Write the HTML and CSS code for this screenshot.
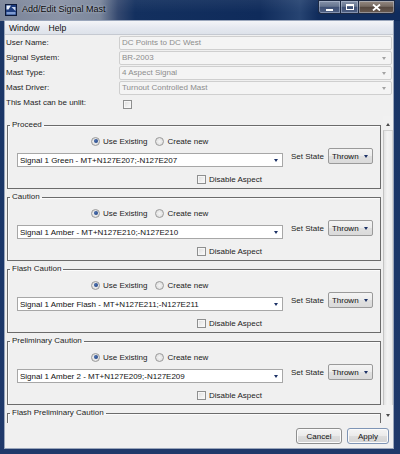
FILE: index.html
```html
<!DOCTYPE html>
<html>
<head>
<meta charset="utf-8">
<title>Add/Edit Signal Mast</title>
<link rel="stylesheet" href="styles.css">
</head>
<body>
<div class="window">
  <div class="titlebar">
    <svg class="app-icon" width="12" height="12" viewBox="0 0 12 12">
      <rect x="0.5" y="0.5" width="11" height="11" fill="#1d3c7e" stroke="#0b1838"/>
      <path d="M1.5 1.5 H6 L3.5 5.5 H1.5 Z" fill="#e8eef8"/>
      <path d="M6.5 3 L10.5 3 L10.5 7 Z" fill="#c9d6ee"/>
      <rect x="1.5" y="8" width="9" height="2.5" fill="#7f9bd0"/>
    </svg>
    <span class="title">Add/Edit Signal Mast</span>
    <div class="controls">
      <span class="ctl ctl-min"><i class="min-bar"></i></span>
      <span class="ctl ctl-max"><i class="max-box"></i></span>
      <span class="ctl ctl-close">
        <svg width="9" height="7" viewBox="0 0 9 7"><path d="M1 0.5 L8 6.5 M8 0.5 L1 6.5" stroke="#ffffff" stroke-width="1.8"/></svg>
      </span>
    </div>
  </div>

  <div class="client">
    <div class="menubar">
      <span class="menu">Window</span>
      <span class="menu">Help</span>
    </div>

    <div class="form">
      <span class="lbl">User Name:</span>
      <div class="field">DC Points to DC West</div>
      <span class="lbl">Signal System:</span>
      <div class="field combo">BR-2003<span class="garr"></span></div>
      <span class="lbl">Mast Type:</span>
      <div class="field combo">4 Aspect Signal<span class="garr"></span></div>
      <span class="lbl">Mast Driver:</span>
      <div class="field combo">Turnout Controlled Mast<span class="garr"></span></div>
      <span class="lbl">This Mast can be unlit:</span>
      <div class="unlit"><span class="checkbox"></span></div>
    </div>

    <div class="scroller">
      <div class="viewport">
        <fieldset class="aspect">
          <legend>Proceed</legend>
          <div class="aspect-body">
            <div class="choice">
              <div class="radios">
                <span class="radio on"></span><span class="rtext">Use Existing</span>
                <span class="radio"></span><span class="rtext">Create new</span>
              </div>
              <div class="wcombo">Signal 1 Green - MT+N127E207;-N127E207<span class="barr"></span></div>
              <div class="disable"><span class="checkbox"></span><span>Disable Aspect</span></div>
            </div>
            <div class="state">
              <span>Set State</span>
              <div class="scombo">Thrown<span class="barr"></span></div>
            </div>
          </div>
        </fieldset>

        <fieldset class="aspect">
          <legend>Caution</legend>
          <div class="aspect-body">
            <div class="choice">
              <div class="radios">
                <span class="radio on"></span><span class="rtext">Use Existing</span>
                <span class="radio"></span><span class="rtext">Create new</span>
              </div>
              <div class="wcombo">Signal 1 Amber - MT+N127E210;-N127E210<span class="barr"></span></div>
              <div class="disable"><span class="checkbox"></span><span>Disable Aspect</span></div>
            </div>
            <div class="state">
              <span>Set State</span>
              <div class="scombo">Thrown<span class="barr"></span></div>
            </div>
          </div>
        </fieldset>

        <fieldset class="aspect">
          <legend>Flash Caution</legend>
          <div class="aspect-body">
            <div class="choice">
              <div class="radios">
                <span class="radio on"></span><span class="rtext">Use Existing</span>
                <span class="radio"></span><span class="rtext">Create new</span>
              </div>
              <div class="wcombo">Signal 1 Amber Flash - MT+N127E211;-N127E211<span class="barr"></span></div>
              <div class="disable"><span class="checkbox"></span><span>Disable Aspect</span></div>
            </div>
            <div class="state">
              <span>Set State</span>
              <div class="scombo">Thrown<span class="barr"></span></div>
            </div>
          </div>
        </fieldset>

        <fieldset class="aspect">
          <legend>Preliminary Caution</legend>
          <div class="aspect-body">
            <div class="choice">
              <div class="radios">
                <span class="radio on"></span><span class="rtext">Use Existing</span>
                <span class="radio"></span><span class="rtext">Create new</span>
              </div>
              <div class="wcombo">Signal 1 Amber 2 - MT+N127E209;-N127E209<span class="barr"></span></div>
              <div class="disable"><span class="checkbox"></span><span>Disable Aspect</span></div>
            </div>
            <div class="state">
              <span>Set State</span>
              <div class="scombo">Thrown<span class="barr"></span></div>
            </div>
          </div>
        </fieldset>

        <fieldset class="aspect">
          <legend>Flash Preliminary Caution</legend>
          <div class="aspect-body aspect-empty"></div>
        </fieldset>
      </div>
      <div class="vscroll">
        <div class="sbtn"><span class="sarr-up"></span></div>
        <div class="track"><div class="thumb"></div></div>
        <div class="sbtn sbtn-down"><span class="sarr-down"></span></div>
      </div>
    </div>

    <div class="buttons">
      <button class="btn btn-cancel">Cancel</button>
      <button class="btn btn-apply">Apply</button>
    </div>
  </div>
</div>
</body>
</html>
```

FILE: styles.css
```css
* { box-sizing: border-box; }
html, body { margin: 0; padding: 0; }
body {
  width: 400px;
  height: 454px;
  overflow: hidden;
  font-family: "Liberation Sans", Arial, sans-serif;
  font-size: 8px;
  color: #1c1c1c;
  background: #17315f;
}

.window {
  width: 400px;
  height: 454px;
  display: flex;
  flex-direction: column;
  background: linear-gradient(to bottom, #1a3565 0%, #1b3769 60%, #20396a 100%);
}

/* ---------- title bar ---------- */
.titlebar {
  height: 21px;
  flex: none;
  display: flex;
  align-items: flex-start;
  background:
    linear-gradient(to bottom, rgba(255,255,255,0.06), rgba(255,255,255,0) 60%),
    linear-gradient(to right, #7a8498 0px, #8a93a6 60px, #7b879c 100px, #34486f 118px, #13305f 135px, #0f2b5b 260px, #274472 300px, #102c5c 318px);
}
.app-icon { margin: 4px 0 0 5px; flex: none; }
.title {
  margin: 3px 0 0 5px;
  font-size: 9px;
  line-height: 13px;
  color: #0c0c0c;
  text-shadow: 0 0 3px rgba(230,235,245,0.8);
}
.controls {
  margin-left: auto;
  margin-right: 5px;
  display: flex;
  height: 14px;
}
.ctl {
  height: 14px;
  display: flex;
  align-items: center;
  justify-content: center;
  border: 1px solid #1d2a44;
  box-shadow: inset 0 0 0 1px rgba(200,210,230,0.45);
  background: linear-gradient(to bottom, #8793aa 0%, #66758f 45%, #3f5074 50%, #4f6186 100%);
}
.ctl-min { width: 22px; border-radius: 0 0 0 3px; border-right: none; }
.ctl-max { width: 19px; }
.ctl-close {
  width: 36px;
  border-left: none;
  border-radius: 0 0 3px 0;
  background: linear-gradient(to bottom, #958a82 0%, #766a62 45%, #54473f 50%, #6a5b51 100%);
}
.min-bar { display: block; width: 7px; height: 2px; background: #fff; margin-top: 5px; }
.max-box { display: block; width: 8px; height: 6px; border: 1px solid #fff; border-top-width: 2px; }

/* ---------- client ---------- */
.client {
  flex: 1;
  margin: 0 7px 6px 5px;
  background: #f0f0f0;
  display: flex;
  flex-direction: column;
  min-height: 0;
  box-shadow: 0 0 0 1px #9aa6bb;
}

.menubar {
  height: 14px;
  flex: none;
  display: flex;
  align-items: center;
  padding-left: 4px;
  gap: 9px;
  font-size: 8.6px;
  color: #111;
  background: linear-gradient(to bottom, #f4f5f8 0%, #e6e9f0 50%, #dde2ea 100%);
  border-bottom: 1px solid #c5c9d1;
}

.form {
  flex: none;
  height: 81px;
  display: grid;
  grid-template-columns: 113px 1fr;
  grid-template-rows: 15px 15px 15px 15px 16px;
  padding: 1px 1px 0 1px;
  align-items: start;
}
.lbl { line-height: 14px; color: #1d1d1d; }
.field {
  height: 14px;
  line-height: 12px;
  padding-left: 2px;
  border: 1px solid #cfcfcf;
  border-radius: 2px;
  background: #f4f4f4;
  color: #8d8d8d;
  display: flex;
  align-items: center;
}
.combo .garr {
  margin-left: auto;
  margin-right: 5px;
  width: 0; height: 0;
  border-left: 2.5px solid transparent;
  border-right: 2.5px solid transparent;
  border-top: 3px solid #a3a3a3;
}
.unlit { padding: 4px 0 0 4px; }

.checkbox {
  display: inline-block;
  width: 9px;
  height: 9px;
  border: 1px solid #8e8f8f;
  background: linear-gradient(135deg, #dcdcdc 0%, #f0f0f0 60%, #fbfbfb 100%);
  box-shadow: inset 0 0 0 1px #f6f6f6;
  flex: none;
}

/* ---------- scroll area ---------- */
.scroller {
  flex: 1;
  min-height: 0;
  display: flex;
}
.viewport {
  flex: 1;
  min-width: 0;
  overflow: hidden;
  padding: 4px 0 0 2px;
}
.aspect {
  margin: 0 2px 3px 0;
  padding: 0;
  min-width: 0;
  border: 1px solid #6b6b6b;
  box-shadow: inset 1px 1px 0 #fbfbfb;
}
.aspect legend {
  padding: 0 2px;
  margin-left: 2px;
  line-height: 10px;
  color: #1d1d1d;
}
.aspect-body {
  display: flex;
  align-items: flex-start;
  padding: 5px 6px 4px 9px;
}
.aspect-empty { height: 58px; }
.choice {
  width: 266px;
  flex: none;
  display: flex;
  flex-direction: column;
}
.radios {
  height: 12px;
  display: flex;
  align-items: center;
  padding-left: 74px;
}
.radio {
  width: 9px;
  height: 9px;
  border-radius: 50%;
  border: 1px solid #9a9a9a;
  background: radial-gradient(circle at 50% 50%, #f4f4f4 0%, #d9d9d9 100%);
  margin-right: 3px;
  flex: none;
  display: flex;
  align-items: center;
  justify-content: center;
}
.radio.on::after {
  content: "";
  width: 4px;
  height: 4px;
  border-radius: 50%;
  background: radial-gradient(circle at 40% 40%, #4a6fb0 0%, #1a3a78 100%);
}
.rtext { margin-right: 8px; }

.wcombo {
  margin-top: 6px;
  height: 14px;
  border: 1px solid #a7a7a7;
  background: #fff;
  padding-left: 2px;
  display: flex;
  align-items: center;
  color: #111;
}
.barr {
  margin-left: auto;
  margin-right: 4px;
  width: 0; height: 0;
  border-left: 2.5px solid transparent;
  border-right: 2.5px solid transparent;
  border-top: 3px solid #1b3166;
}
.disable {
  margin-top: 7px;
  height: 10px;
  display: flex;
  align-items: center;
  padding-left: 180px;
}
.disable .checkbox { margin-right: 3px; }

.state {
  margin: 13px 0 0 8px;
  height: 16px;
  display: flex;
  align-items: center;
  color: #1d1d1d;
}
.scombo {
  margin-left: 4px;
  width: 45px;
  height: 16px;
  border: 1px solid #9a9a9a;
  border-radius: 2px;
  background: linear-gradient(to bottom, #f4f4f4 0%, #ececec 50%, #e0e0e0 51%, #dadada 100%);
  display: flex;
  align-items: center;
  padding-left: 3px;
  color: #111;
}

.vscroll {
  width: 10px;
  flex: none;
  display: flex;
  flex-direction: column;
  background: #f1f1f1;
}
.sbtn {
  height: 14px;
  flex: none;
  display: flex;
  align-items: flex-end;
  justify-content: center;
  padding-bottom: 4px;
}
.sbtn-down { align-items: flex-start; padding: 5px 0 0 0; }
.sarr-up {
  width: 0; height: 0;
  border-left: 2.5px solid transparent;
  border-right: 2.5px solid transparent;
  border-bottom: 3px solid #4a4a4a;
}
.sarr-down {
  width: 0; height: 0;
  border-left: 2.5px solid transparent;
  border-right: 2.5px solid transparent;
  border-top: 3px solid #4a4a4a;
}
.track { flex: 1; padding-bottom: 4px; }
.thumb {
  height: 100%;
  border-left: 1px solid #c3c3c3;
  border-right: 1px solid #d4d4d4;
  border-top: 1px solid #d0d0d0;
  background: linear-gradient(to right, #e2e2e2 0%, #f3f3f3 40%, #ececec 100%);
}

/* ---------- buttons ---------- */
.buttons {
  height: 25px;
  flex: none;
  display: flex;
  justify-content: flex-end;
  align-items: flex-start;
  gap: 5px;
  padding: 5px 4px 0 0;
}
.btn {
  height: 16px;
  padding: 0;
  font-family: "Liberation Sans", Arial, sans-serif;
  font-size: 8px;
  color: #111;
  border: 1px solid #8e8f8f;
  border-radius: 3px;
  background: linear-gradient(to bottom, #f4f4f4 0%, #ebebeb 48%, #dddddd 52%, #d3d3d3 100%);
  box-shadow: inset 0 0 0 1px #fbfbfb;
}
.btn-cancel { width: 46px; }
.btn-apply { width: 42px; border-color: #7f95b5; }
```
